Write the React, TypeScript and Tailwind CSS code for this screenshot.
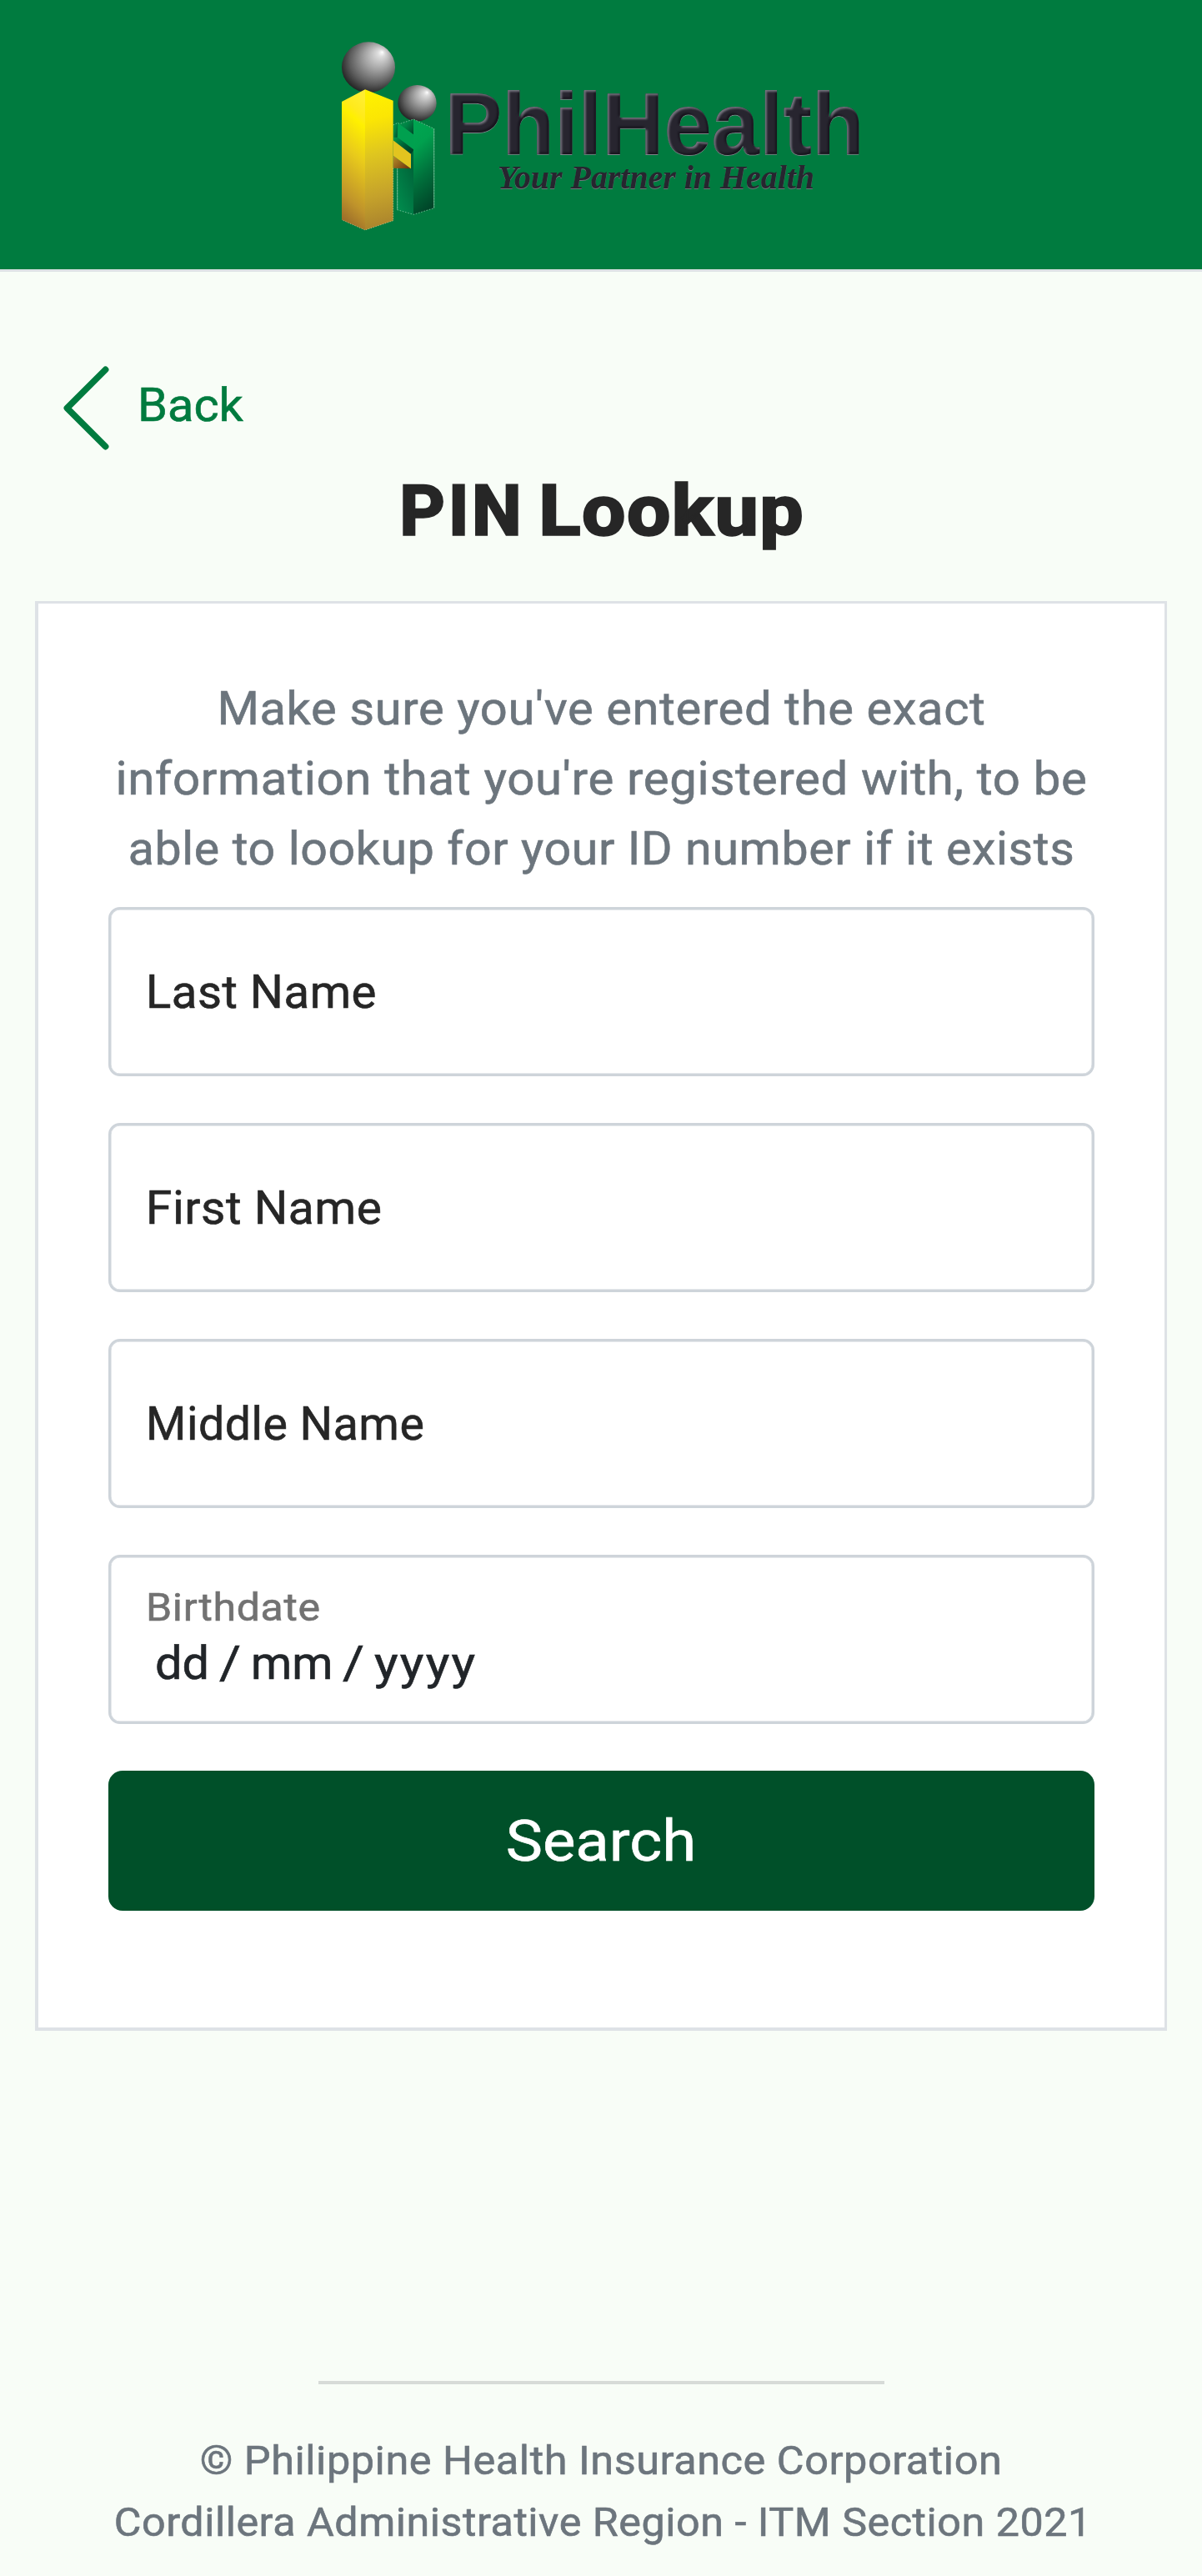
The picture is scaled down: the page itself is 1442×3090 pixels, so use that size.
import type { ReactNode } from "react";

function Logo() {
  return (
    <svg
      className="h-[227px] w-[626px] overflow-visible"
      viewBox="408 50 626 227"
      role="img"
      aria-label="PhilHealth, Your Partner in Health"
    >
      <defs>
        <radialGradient id="ball" cx="0.5" cy="0.5" r="0.85" fx="0.76" fy="0.2">
          <stop offset="0" stopColor="#ffffff" />
          <stop offset="0.08" stopColor="#dcdcdc" />
          <stop offset="0.3" stopColor="#a3a3a3" />
          <stop offset="0.55" stopColor="#5c5c5c" />
          <stop offset="0.72" stopColor="#232323" />
          <stop offset="1" stopColor="#1d1d1d" />
        </radialGradient>
        <linearGradient id="goldLeft" x1="0.55" y1="0" x2="0.4" y2="1">
          <stop offset="0" stopColor="#ffee30" />
          <stop offset="0.13" stopColor="#ffea1c" />
          <stop offset="0.2" stopColor="#fff000" />
          <stop offset="0.45" stopColor="#e9cb1b" />
          <stop offset="0.8" stopColor="#bf932b" />
          <stop offset="1" stopColor="#98692a" />
        </linearGradient>
        <linearGradient id="goldRight" x1="0.5" y1="0" x2="0.55" y2="1">
          <stop offset="0" stopColor="#fff200" />
          <stop offset="0.2" stopColor="#fbe604" />
          <stop offset="0.45" stopColor="#dfc61f" />
          <stop offset="0.75" stopColor="#c5a22b" />
          <stop offset="1" stopColor="#a8812d" />
        </linearGradient>
        <linearGradient id="armUnder" x1="0" y1="0" x2="1" y2="0.7">
          <stop offset="0" stopColor="#b9912b" />
          <stop offset="1" stopColor="#70390f" />
        </linearGradient>
        <linearGradient id="greenRight" x1="0.3" y1="0" x2="0.5" y2="1">
          <stop offset="0" stopColor="#00a551" />
          <stop offset="0.25" stopColor="#00a04e" />
          <stop offset="0.6" stopColor="#00713c" />
          <stop offset="1" stopColor="#004428" />
        </linearGradient>
        <linearGradient id="greenLeft" x1="0.9" y1="0" x2="0.3" y2="1">
          <stop offset="0" stopColor="#005c35" />
          <stop offset="0.5" stopColor="#007341" />
          <stop offset="1" stopColor="#00894c" />
        </linearGradient>
        <linearGradient id="greenShade" x1="0" y1="0" x2="1" y2="1">
          <stop offset="0" stopColor="#009a4c" />
          <stop offset="0.5" stopColor="#005c34" />
          <stop offset="1" stopColor="#00321f" />
        </linearGradient>
        <linearGradient id="greenTop" x1="0" y1="0" x2="1" y2="0.9">
          <stop offset="0" stopColor="#00924a" />
          <stop offset="0.45" stopColor="#008445" />
          <stop offset="1" stopColor="#004c2c" />
        </linearGradient>
        <filter id="bevel" x="-5%" y="-10%" width="110%" height="120%" colorInterpolationFilters="sRGB">
          <feOffset in="SourceAlpha" dx="1.6" dy="2.2" result="shift" />
          <feGaussianBlur in="shift" stdDeviation="1" result="shiftSoft" />
          <feFlood floodColor="#74727d" />
          <feComposite operator="in" in2="SourceAlpha" />
          <feComposite operator="out" in2="shiftSoft" result="lit" />
          <feOffset in="SourceAlpha" dx="-2" dy="-2.4" />
          <feGaussianBlur stdDeviation="1" result="darkShift" />
          <feFlood floodColor="#16141c" />
          <feComposite operator="in" in2="SourceAlpha" />
          <feComposite operator="out" in2="darkShift" result="dark" />
          <feOffset in="SourceAlpha" dx="0.4" dy="0.8" result="rimShape" />
          <feFlood floodColor="#7f868a" />
          <feComposite operator="in" in2="rimShape" result="rim" />
          <feMerge>
            <feMergeNode in="rim" />
            <feMergeNode in="SourceGraphic" />
            <feMergeNode in="dark" />
            <feMergeNode in="lit" />
          </feMerge>
        </filter>
        <filter id="rim" x="-5%" y="-10%" width="110%" height="120%" colorInterpolationFilters="sRGB">
          <feOffset in="SourceAlpha" dx="0.4" dy="0.5" result="rimShape" />
          <feFlood floodColor="#6f777b" />
          <feComposite operator="in" in2="rimShape" result="edge" />
          <feMerge>
            <feMergeNode in="edge" />
            <feMergeNode in="SourceGraphic" />
          </feMerge>
        </filter>
      </defs>

      {/* Emblem: a tall and a short figure joined by an arm */}
      <g transform="translate(390 30) scale(0.33333)">
        <ellipse cx="156" cy="152" rx="96" ry="91" fill="url(#ball)" />
        <ellipse cx="331.500" cy="281" rx="69.500" ry="65" fill="url(#ball)" />
        <polygon points="260,514 318,440 318,682 260,665" fill="url(#greenLeft)" />
        <polygon points="318,339 392,373 392,659 318,682" fill="url(#greenRight)" />
        <polygon points="245,360 262,352 318,393 318,450 245,404" fill="#00a04f" />
        <polygon points="245,360 262,352 260,404 245,408" fill="url(#greenTop)" />
        <polygon points="268,356 318,339 318,394" fill="url(#greenTop)" />
        <polygon points="245,404 262,405 318,448 318,470 309,470 245,417" fill="url(#greenShade)" />
        <polygon points="309,464 318,450 318,520 309,518" fill="#006437" />
        <polyline
          points="245,360 262,352 268,356 318,339 392,373 392,659 318,682 260,665 260,514"
          fill="none"
          stroke="#7fc79f"
          strokeWidth="2.500"
          strokeDasharray="5 5"
        />
        <path d="M392 373V659M260 514V665" stroke="#6dbb90" strokeWidth="2.500" />
        <polygon points="245,470 309,517 245,515" fill="url(#armUnder)" />
        <polygon points="245,415 309,464 309,517 245,470" fill="#e2c41f" />
        <polygon points="60,276 144,232 144,738 60,701" fill="url(#goldLeft)" />
        <polygon points="144,232 245,272 245,704 144,738" fill="url(#goldRight)" />
        <path d="M245 515V704L144 738L60 701" fill="none" stroke="#d9d3a0" strokeWidth="2" strokeDasharray="4 5" />
      </g>

      <text
        x="533.500"
        y="184.500"
        textLength="503"
        lengthAdjust="spacingAndGlyphs"
        filter="url(#bevel)"
        className="fill-[#27252f] font-['Liberation_Sans',sans-serif] text-[106.600px] font-bold"
      >
        PhilHealth
      </text>
      <text
        x="597"
        y="225.700"
        textLength="380"
        lengthAdjust="spacingAndGlyphs"
        filter="url(#rim)"
        className="fill-[#27252f] font-['Liberation_Serif',serif] text-[41px] font-bold italic"
      >
        Your Partner in Health
      </text>
    </svg>
  );
}

function ChevronLeft() {
  return (
    <svg className="size-[123px] shrink-0" viewBox="0 0 16 16" fill="currentColor" aria-hidden="true">
      <path
        fillRule="evenodd"
        d="M11.354 1.646a.5.5 0 0 1 0 .708L5.707 8l5.647 5.646a.5.5 0 0 1-.708.708l-6-6a.5.5 0 0 1 0-.708l6-6a.5.5 0 0 1 .708 0z"
      />
    </svg>
  );
}

function Field({ children }: { children: ReactNode }) {
  return (
    <div className="flex h-[203px] flex-col items-start rounded-[14px] border-[3px] border-[#ced4da] bg-white pl-[42px] text-[55px] leading-[84px] text-[#262626] shadow-[inset_0_0_0_0.5px_#ced4da]">
      {children}
    </div>
  );
}

export default function App() {
  return (
    <div className="min-h-[3090px] w-[1442px] bg-[#f8fdf7] font-[Roboto,sans-serif] [-webkit-text-stroke:0.6px]">
      <header className="flex h-[326px] justify-center border-b-[3px] border-[#dee2e6] bg-[#007b3f] pt-[50px] [-webkit-text-stroke:0]">
        <Logo />
      </header>

      <main className="pt-[102px]">
        <a className="flex w-fit items-center pl-[42px] text-[#007b3f]">
          <ChevronLeft />
          <span className="mb-[8px] origin-left scale-x-[1.05] text-[55px] leading-[84px]">Back</span>
        </a>

        <h1 className="mt-[10px] flex pl-[479px] text-[85.5px] leading-[105px] font-extrabold text-[#262626] [-webkit-text-stroke:1.4px]">
          <span className="w-[167px] tracking-[3px]">PIN</span>
          <span className="origin-left scale-x-[1.1] tracking-[0.8px]">Lookup</span>
        </h1>

        <section className="mt-[55px] ml-[42px] h-[1715px] w-[1358px] border-[3px] border-b-[4px] border-l-[4px] border-[#dee2e6] bg-white pt-[84px]">
          <p className="text-center text-[55px] leading-[84px] tracking-[0.6px] text-[#6c757d]">
            <span className="block scale-x-[1.0515] whitespace-nowrap">Make sure you've entered the exact</span>
            <span className="block scale-x-[1.058] whitespace-nowrap">
              information that you're registered with, to be
            </span>
            <span className="block scale-x-[1.042] whitespace-nowrap">
              able to lookup for your ID number if it exists
            </span>
          </p>

          <form className="mt-[28px] ml-[84px] flex w-[1183px] flex-col gap-[56px]">
            <Field>
              <label className="my-auto origin-left scale-x-[1.023] tracking-[0.5px]">Last Name</label>
            </Field>
            <Field>
              <label className="my-auto origin-left scale-x-[1.034] tracking-[0.5px]">First Name</label>
            </Field>
            <Field>
              <label className="my-auto origin-left scale-x-[1.008] tracking-[0.5px]">Middle Name</label>
            </Field>
            <Field>
              <label className="mt-[30px] origin-left scale-x-[1.065] text-[47px] leading-[60px] tracking-[0.6px] text-[#727272]">
                Birthdate
              </label>
              <div className="mt-[4px] ml-[11px] flex leading-[66px] text-[#212529]">
                <span className="w-[77px]">
                  <span className="inline-block origin-left scale-x-[1.05]">dd</span>
                </span>
                <span className="w-[38px]">
                  <span className="inline-block origin-left scale-x-[1.15]">/</span>
                </span>
                <span className="w-[110px]">
                  <span className="inline-block origin-left scale-x-[1.02]">mm</span>
                </span>
                <span className="w-[38px]">
                  <span className="inline-block origin-left scale-x-[1.15]">/</span>
                </span>
                <span className="origin-left scale-x-[1.1] tracking-[2px]">yyyy</span>
              </div>
            </Field>
            <button
              type="button"
              className="h-[168px] rounded-[17px] bg-[#005029] pr-[2px] text-[69px] leading-[105px] text-white"
            >
              <span className="inline-block scale-x-[1.078]">Search</span>
            </button>
          </form>
        </section>
      </main>

      <footer className="flex flex-col items-center pt-[420px] text-[48px] leading-[74px] tracking-[0.5px] text-[#6c757d]">
        <div className="h-[4px] w-[679px] bg-[#d7dbd8]" />
        <p className="mt-[55px] scale-x-[1.051]">© Philippine Health Insurance Corporation</p>
        <p className="scale-x-[1.047] pl-[5px] whitespace-nowrap">
          Cordillera Administrative Region - ITM Section 2021
        </p>
      </footer>
    </div>
  );
}
